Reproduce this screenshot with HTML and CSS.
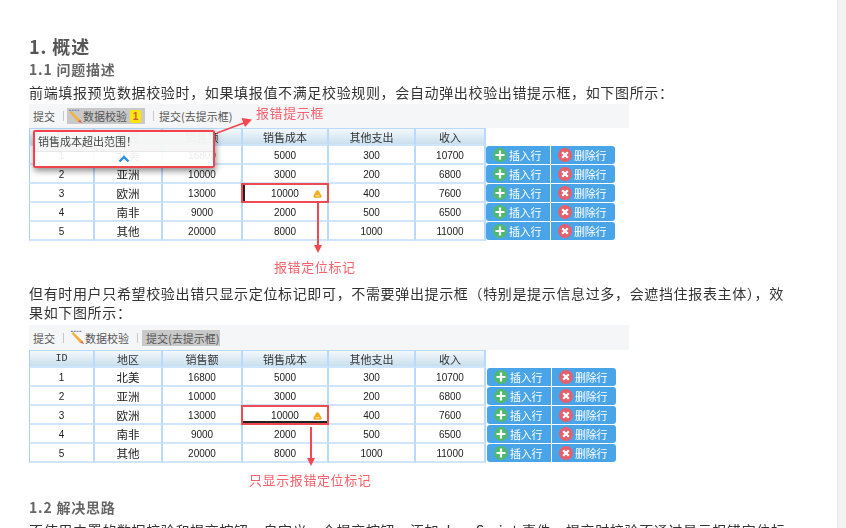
FILE: index.html
```html
<!DOCTYPE html>
<html lang="zh">
<head>
<meta charset="utf-8">
<title>数据校验</title>
<link rel="stylesheet" href="styles.css">
</head>
<body>
<svg class="defs" width="0" height="0" aria-hidden="true">
  <symbol id="plus" viewBox="0 0 14 14"><circle cx="7" cy="7" r="7" fill="#4fba6f"/><path d="M7 2.500v9M2.500 7h9" stroke="#fff" stroke-width="2.200"/></symbol>
  <symbol id="cross" viewBox="0 0 14 14"><circle cx="7" cy="7" r="7" fill="#e4606d"/><path d="M4.200 4.200l5.600 5.600M9.800 4.200l-5.600 5.600" stroke="#fff" stroke-width="2.300"/></symbol>
  <symbol id="warn" viewBox="0 0 9 8"><path d="M4.500 .3C5.300 .3 5.800 1 6.300 1.800L8.400 5.500C9 6.600 8.500 7.700 7.300 7.700H1.700C.5 7.700 0 6.600 .6 5.500L2.700 1.800C3.200 1 3.700 .3 4.500 .3Z" fill="#f5ab1b"/><path d="M2.500 5.800h4" stroke="#fff3c4" stroke-width="1"/></symbol>
  <symbol id="pencil" viewBox="0 0 16 15"><path d="M1 1h11" stroke="#6f86b8" stroke-width="1.400" stroke-dasharray="2 1"/><path d="M1.500 3l2-1.500 9.500 9.500-2.500 2z" fill="#f3b23c"/><path d="M10.500 13l2.500-2 2 3.500z" fill="#e0604f"/></symbol>
</svg>
<div class="page">
  <main class="content">
    <h1>1. 概述</h1>
    <h2>1.1 问题描述</h2>
    <p>前端填报预览数据校验时，如果填报值不满足校验规则，会自动弹出校验出错提示框，如下图所示：</p>

    <figure class="shot shot-one">
      <div class="toolbar">
        <span class="tool">提交</span><i class="sep"></i>
        <span class="tool tool-on tool-check"><svg class="pencil"><use href="#pencil"/></svg>数据校验<b class="badge">1</b></span><i class="sep"></i>
        <span class="tool">提交(去提示框)</span>
      </div>
      <table class="grid">
        <tr><th class="c1">ID</th><th class="c2">地区</th><th class="c3">销售额</th><th class="c4">销售成本</th><th class="c5">其他支出</th><th class="c6">收入</th></tr>
        <tr><td>1</td><td class="zh">北美</td><td>16800</td><td>5000</td><td>300</td><td>10700</td><td class="act"><div class="acts"><span class="btn"><svg class="ico"><use href="#plus"/></svg>插入行</span><span class="btn"><svg class="ico"><use href="#cross"/></svg>删除行</span></div></td></tr>
        <tr><td>2</td><td class="zh">亚洲</td><td>10000</td><td>3000</td><td>200</td><td>6800</td><td class="act"><div class="acts"><span class="btn"><svg class="ico"><use href="#plus"/></svg>插入行</span><span class="btn"><svg class="ico"><use href="#cross"/></svg>删除行</span></div></td></tr>
        <tr><td>3</td><td class="zh">欧洲</td><td>13000</td><td class="bad bad-one">10000<svg class="warn"><use href="#warn"/></svg></td><td>400</td><td>7600</td><td class="act"><div class="acts"><span class="btn"><svg class="ico"><use href="#plus"/></svg>插入行</span><span class="btn"><svg class="ico"><use href="#cross"/></svg>删除行</span></div></td></tr>
        <tr><td>4</td><td class="zh">南非</td><td>9000</td><td>2000</td><td>500</td><td>6500</td><td class="act"><div class="acts"><span class="btn"><svg class="ico"><use href="#plus"/></svg>插入行</span><span class="btn"><svg class="ico"><use href="#cross"/></svg>删除行</span></div></td></tr>
        <tr><td>5</td><td class="zh">其他</td><td>20000</td><td>8000</td><td>1000</td><td>11000</td><td class="act"><div class="acts"><span class="btn"><svg class="ico"><use href="#plus"/></svg>插入行</span><span class="btn"><svg class="ico"><use href="#cross"/></svg>删除行</span></div></td></tr>
      </table>
      <div class="popup">
        <div class="popup-msg">销售成本超出范围！</div>
        <div class="popup-foot"><svg class="chev" viewBox="0 0 12 8"><path d="M1.500 6.500L6 2l4.500 4.500" fill="none" stroke="#2f8fe0" stroke-width="2.400"/></svg></div>
      </div>
      <svg class="marks" viewBox="0 0 600 180">
        <path d="M188 29L216 18.500" stroke="#f4474f" stroke-width="1.800"/><path d="M223 15.500L212.500 14L216 23Z" fill="#f4474f"/>
        <path d="M289 99V142" stroke="#f4474f" stroke-width="2"/><path d="M285 141H293L289 149Z" fill="#f4474f"/>
      </svg>
      <span class="note note-a">报错提示框</span>
      <span class="note note-b">报错定位标记</span>
    </figure>

    <p class="para-two">但有时用户只希望校验出错只显示定位标记即可，不需要弹出提示框（特别是提示信息过多，会遮挡住报表主体），效果如下图所示：</p>

    <figure class="shot shot-two">
      <div class="toolbar">
        <span class="tool">提交</span><i class="sep"></i>
        <span class="tool tool-check"><svg class="pencil"><use href="#pencil"/></svg>数据校验</span><i class="sep"></i>
        <span class="tool tool-on">提交(去提示框)</span>
      </div>
      <table class="grid">
        <tr><th class="c1">ID</th><th class="c2">地区</th><th class="c3">销售额</th><th class="c4">销售成本</th><th class="c5">其他支出</th><th class="c6">收入</th></tr>
        <tr><td>1</td><td class="zh">北美</td><td>16800</td><td>5000</td><td>300</td><td>10700</td><td class="act"><div class="acts"><span class="btn"><svg class="ico"><use href="#plus"/></svg>插入行</span><span class="btn"><svg class="ico"><use href="#cross"/></svg>删除行</span></div></td></tr>
        <tr><td>2</td><td class="zh">亚洲</td><td>10000</td><td>3000</td><td>200</td><td>6800</td><td class="act"><div class="acts"><span class="btn"><svg class="ico"><use href="#plus"/></svg>插入行</span><span class="btn"><svg class="ico"><use href="#cross"/></svg>删除行</span></div></td></tr>
        <tr><td>3</td><td class="zh">欧洲</td><td>13000</td><td class="bad bad-two">10000<svg class="warn"><use href="#warn"/></svg></td><td>400</td><td>7600</td><td class="act"><div class="acts"><span class="btn"><svg class="ico"><use href="#plus"/></svg>插入行</span><span class="btn"><svg class="ico"><use href="#cross"/></svg>删除行</span></div></td></tr>
        <tr><td>4</td><td class="zh">南非</td><td>9000</td><td>2000</td><td>500</td><td>6500</td><td class="act"><div class="acts"><span class="btn"><svg class="ico"><use href="#plus"/></svg>插入行</span><span class="btn"><svg class="ico"><use href="#cross"/></svg>删除行</span></div></td></tr>
        <tr><td>5</td><td class="zh">其他</td><td>20000</td><td>8000</td><td>1000</td><td>11000</td><td class="act"><div class="acts"><span class="btn"><svg class="ico"><use href="#plus"/></svg>插入行</span><span class="btn"><svg class="ico"><use href="#cross"/></svg>删除行</span></div></td></tr>
      </table>
      <svg class="marks" viewBox="0 0 600 165">
        <path d="M282 102V135" stroke="#f4474f" stroke-width="2"/><path d="M278 133H286L282 141Z" fill="#f4474f"/>
      </svg>
      <span class="note note-c">只显示报错定位标记</span>
    </figure>

    <h2 class="sub-two">1.2 解决思路</h2>
    <p class="para-three">不使用内置的数据校验和提交按钮，自定义一个提交按钮，添加 JavaScript 事件，提交时校验不通过显示报错定位标</p>
  </main>
  <div class="scrollbar"></div>
</div>
</body>
</html>
```

FILE: styles.css
```css
html, body { margin: 0; padding: 0; height: 100%; background: #fff; overflow: hidden; }
.defs { position: absolute; }
.page { display: flex; height: 528px; overflow: hidden; font-family: "Noto Sans CJK SC", "Noto Sans", sans-serif; color: #333; }
.content { flex: 1; min-width: 0; padding: 33px 0 0 29px; filter: blur(.3px); }
.scrollbar { width: 8px; border-left: 1px solid #e8e8e8; background: #f3f3f3; }

h1 { margin: 0; font-size: 18px; line-height: 26px; font-weight: 700; color: #555; letter-spacing: .9px; }
h2 { margin: 0; font-size: 14px; line-height: 20px; font-weight: 700; color: #666; letter-spacing: .8px; }
p { margin: 0; font-size: 14px; line-height: 19px; letter-spacing: .65px; color: #333; width: 800px; }
.content > h2 + p { margin-top: 4px; }

.shot { position: relative; margin: 2px 0 0; width: 600px; height: 180px; }
.toolbar { display: flex; align-items: center; height: 24px; background: #f5f6f8; padding-left: 4px; font-size: 11px; color: #555; box-sizing: border-box; }
.tool { display: flex; align-items: center; height: 16px; white-space: nowrap; }
.tool-on { background: #c9c9c9; padding: 0 2px; margin-left: -2px; }
.tool-check { padding-left: 1px; }
.sep { width: 1px; height: 10px; background: #c8c8c8; margin: 0 5px 0 8px; }
.pencil { width: 15px; height: 15px; }
.badge { display: inline-block; width: 11px; height: 13px; margin-left: 3px; margin-right: 2px; background: #ffe600; color: #c55; font: 700 10px/13px "Liberation Sans", sans-serif; text-align: center; border-radius: 2px; }
.shot-two .toolbar { height: 25px; }
.shot-two .tool-on { padding: 0 1px 0 4px; margin-left: -1px; }

.grid { border-collapse: separate; border-spacing: 0; table-layout: fixed; width: 586px; font: 10px/15px "Liberation Sans", "Noto Sans CJK SC", sans-serif; color: #222; }
.grid th, .grid td { height: 15px; padding: 2px 0 0; text-align: center; border-right: 2px solid #b9dafa; border-bottom: 2px solid #cfe5fc; box-sizing: content-box; }
.grid th { height: 14px; padding-top: 1px; font: 400 11px/14px "Noto Sans CJK SC", sans-serif; color: #333; background: linear-gradient(#f3f8fc, #c9dfee); border-top: 1px solid #b9dafa; overflow: hidden; }
.grid th.c1 { font: 400 10px/14px "Liberation Mono", monospace; }
.grid tr > :first-child { border-left: 1px solid #a6d0f8; }
.c1 { width: 63px; }
.c2 { width: 66px; }
.c3 { width: 78px; }
.c4 { width: 84px; }
.c5 { width: 85px; }
.c6 { width: 68px; }
.grid td.zh { height: 16px; padding-top: 1px; font: 11.500px/16px "Noto Sans CJK SC", sans-serif; overflow: hidden; }
.grid td.act { border: 0; height: 19px; padding: 0; vertical-align: top; }
.acts { display: flex; width: 129px; height: 18px; border-radius: 3px; overflow: hidden; gap: 1px; }
.shot-two .acts { margin-left: 1px; }
.btn { flex: 1; display: flex; align-items: center; padding-left: 7px; background: #4aa5e8; color: #fff; font: 11px/17px "Noto Sans CJK SC", sans-serif; letter-spacing: -.2px; }
.ico { width: 14px; height: 14px; margin-right: 2px; flex: none; }

.bad { position: relative; }
.bad::after { content: ""; position: absolute; inset: -1px -2px -2px -2px; border: 2px solid #ee4a52; pointer-events: none; }
.bad-one { box-shadow: inset 2px 1px 0 #222; }
.bad-two { box-shadow: inset 0 -2px 0 #222; }
.warn { position: absolute; right: 5px; top: 6px; width: 9px; height: 8px; }

.popup { position: absolute; left: 4px; top: 26px; width: 178px; height: 34px; border: 2px solid #f0434c; border-radius: 2px; background: rgba(255,255,255,.92); box-shadow: 1px 3px 6px rgba(0,0,0,.45); }
.popup-msg { height: 19px; padding-left: 3px; font: 11px/18px "Noto Sans CJK SC", sans-serif; color: #444; background: rgba(240,240,240,.6); border-bottom: 1px solid #e8e8e8; }
.popup-foot { display: flex; justify-content: center; padding-top: 3px; }
.chev { width: 12px; height: 8px; }

.marks { position: absolute; left: 0; top: 0; width: 100%; height: 100%; pointer-events: none; overflow: visible; }
.note { position: absolute; color: #f9606a; white-space: nowrap; font-size: 13px; line-height: 18px; letter-spacing: .6px; }
.note-a { left: 227px; top: 0; }
.note-b { left: 245px; top: 154px; }
.note-c { left: 220px; top: 146px; }

.para-two { width: 762px; }
.shot-two { margin-top: 3px; height: 165px; }
.sub-two { margin-top: 7px; }
.para-three { margin-top: 3px; }
```
